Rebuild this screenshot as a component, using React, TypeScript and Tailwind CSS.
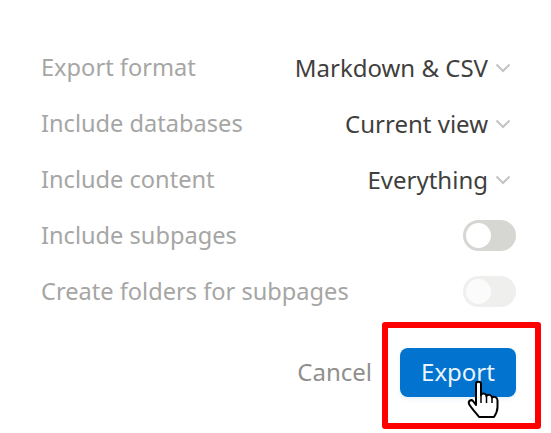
import React from "react";

const font = { fontFamily: '"Noto Sans", sans-serif' };

function Chevron() {
  return (
    <svg width="16" height="10" viewBox="0 0 16 10" className="ml-[7px] mr-[5px] shrink-0" fill="none">
      <path d="M1.5 1.5 L8 8 L14.5 1.5" stroke="#c4c4c2" strokeWidth="2" />
    </svg>
  );
}

function Row({ label, value }: { label: string; value: string }) {
  return (
    <div className="flex h-[56px] items-center justify-between">
      <span className="text-[23.6px] text-[#a6a6a4]">{label}</span>
      <span className="flex items-center text-[24px] text-[#3f3f3d]">
        {value}
        <Chevron />
      </span>
    </div>
  );
}

function Toggle({ label, dim }: { label: string; dim?: boolean }) {
  return (
    <div className="flex h-[56px] items-center justify-between">
      <span className="text-[23.6px] text-[#a6a6a4]">{label}</span>
      <span className={`mb-px flex h-[31px] w-[53px] items-center rounded-full pl-[3px] ${dim ? "bg-[#efefed]" : "bg-[#d6d6d3]"}`}>
        <span className={`h-[25px] w-[25px] rounded-full ${dim ? "bg-[#fbfbfb]" : "bg-white"}`} />
      </span>
    </div>
  );
}

export default function App() {
  return (
    <div className="relative h-[433px] w-[551px] overflow-hidden bg-white" style={font}>
      <div className="pl-[41px] pr-[35px] pt-[40px]">
        <Row label="Export format" value="Markdown & CSV" />
        <Row label="Include databases" value="Current view" />
        <Row label="Include content" value="Everything" />
        <Toggle label="Include subpages" />
        <Toggle label="Create folders for subpages" dim />
        <div className="mt-[28px] flex items-center justify-end">
          <span className="mb-[2px] mr-[28px] text-[24px] text-[#8f8f8d]">Cancel</span>
          <span className="flex h-[49px] w-[116px] items-center justify-center rounded-[8px] bg-[#0273cf] pb-[2px] text-[24px] text-[#eaf5fd] shadow-[0_2px_4px_rgba(2,115,207,0.1)]">
            Export
          </span>
        </div>
      </div>
      <div className="absolute left-[382px] top-[322px] h-[107px] w-[159px] rounded-[3px] border-[6px] border-[#fe0000]" />
      <svg className="absolute left-[467px] top-[379px]" width="34" height="42" viewBox="0 0 34 42">
        <path
          d="M9 5 C9 2 14 2 14 5 L14 16 C15 14 19 14 19.5 17 C21 15 24.5 15.5 25 18.5 C27 17 30.5 18 30.5 21.5 L30.5 28 C30.5 32 29 35 27 38 L12 38 C9 34 5 30 2 25 C1 22 4 20 6 22 L9 26 Z"
          fill="#fff"
          stroke="#000"
          strokeWidth="2"
          strokeLinejoin="round"
        />
        <path d="M14 16 L14 24 M19.5 17 L19.5 24 M25 18.5 L25 24" stroke="#000" strokeWidth="1.5" />
      </svg>
    </div>
  );
}
